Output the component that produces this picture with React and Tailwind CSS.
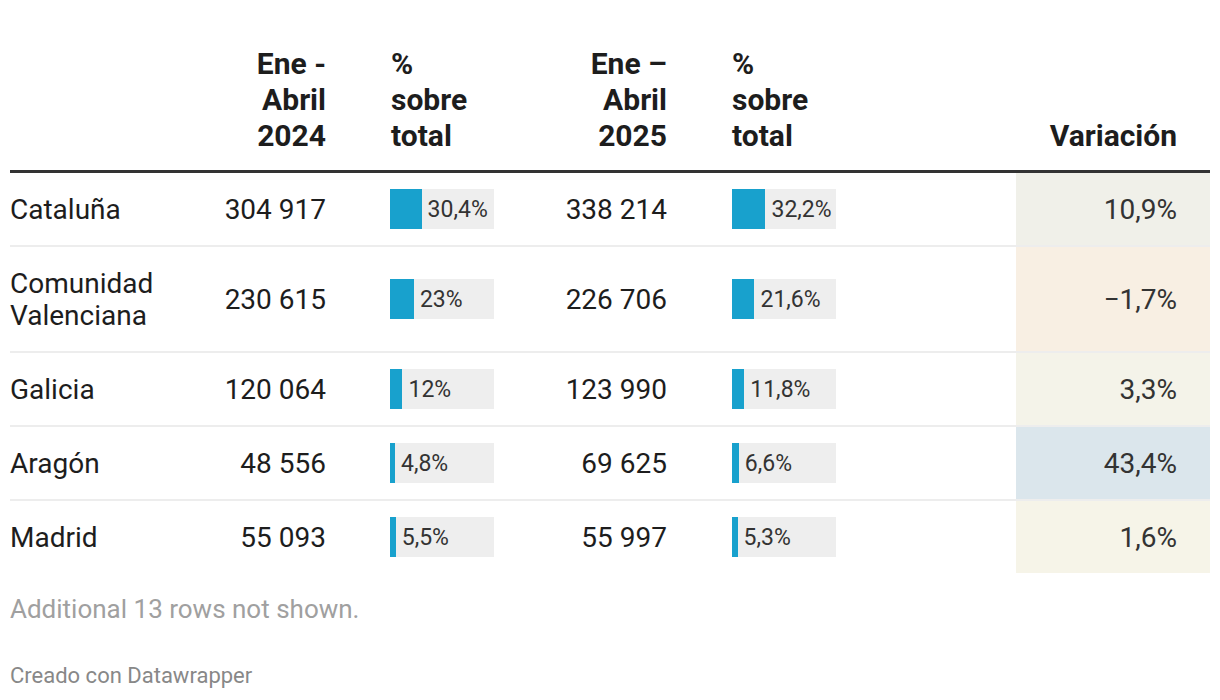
const rows = [
  { name: 'Cataluña', a: '304 917', pa: 30.4, la: '30,4%', b: '338 214', pb: 32.2, lb: '32,2%', v: '10,9%', bg: 'bg-[#f0f0e9]' },
  { name: 'Comunidad Valenciana', a: '230 615', pa: 23, la: '23%', b: '226 706', pb: 21.6, lb: '21,6%', v: '−1,7%', bg: 'bg-[#f8efe3]' },
  { name: 'Galicia', a: '120 064', pa: 12, la: '12%', b: '123 990', pb: 11.8, lb: '11,8%', v: '3,3%', bg: 'bg-[#f4f3e9]' },
  { name: 'Aragón', a: '48 556', pa: 4.8, la: '4,8%', b: '69 625', pb: 6.6, lb: '6,6%', v: '43,4%', bg: 'bg-[#dbe6ec]' },
  { name: 'Madrid', a: '55 093', pa: 5.5, la: '5,5%', b: '55 997', pb: 5.3, lb: '5,3%', v: '1,6%', bg: 'bg-[#f6f4e8]' },
];

const cols = 'grid grid-cols-[180px_136px_200px_141px_349px_194px]';

const Bar = ({ pct, label }) => (
  <div className="flex h-[40px] w-[104px] items-center bg-[#eeeeee]">
    <div className="h-full shrink-0 bg-[#18a1cd]" style={{ width: `${(pct / 100) * 104}px` }} />
    <span className="pl-[6px] text-[23px] leading-none text-[#333]">{label}</span>
  </div>
);

export default function App() {
  return (
    <div className="w-[1220px] h-[700px] bg-white px-[10px] pt-[46px] text-[#1d1d1d]" style={{ fontFamily: 'Roboto, "Noto Sans", sans-serif' }}>
      {/* header */}
      <div className={`${cols} items-end border-b-[3px] border-[#333] pb-[16px] text-[30px] font-bold leading-[36px]`}>
        <div />
        <div className="text-right">Ene -<br />Abril<br />2024</div>
        <div className="pl-[65px]">%<br />sobre<br />total</div>
        <div className="text-right">Ene –<br />Abril<br />2025</div>
        <div className="pl-[65px]">%<br />sobre<br />total</div>
        <div className="pr-[33px] text-right">Variación</div>
      </div>

      {/* body */}
      {rows.map((r, i) => (
        <div
          key={r.name}
          className={`${cols} text-[28px] leading-[32px] ${i < rows.length - 1 ? 'border-b-2 border-black/[0.07]' : ''}`}
        >
          <div className="pt-[21px] pb-[19px]">{r.name}</div>
          <div className="flex items-center justify-end pt-[2px]">{r.a}</div>
          <div className="flex items-center pl-[64px]"><Bar pct={r.pa} label={r.la} /></div>
          <div className="flex items-center justify-end pt-[2px]">{r.b}</div>
          <div className="flex items-center pl-[65px]"><Bar pct={r.pb} label={r.lb} /></div>
          <div className={`flex items-center justify-end pr-[33px] pt-[2px] text-[#333] ${r.bg}`}>{r.v}</div>
        </div>
      ))}

      <p className="mt-[20px] text-[26px] leading-[32px] text-[#a0a0a0]">Additional 13 rows not shown.</p>
      <p className="mt-[38px] text-[22px] leading-[26px] text-[#888]">Creado con Datawrapper</p>
    </div>
  );
}
